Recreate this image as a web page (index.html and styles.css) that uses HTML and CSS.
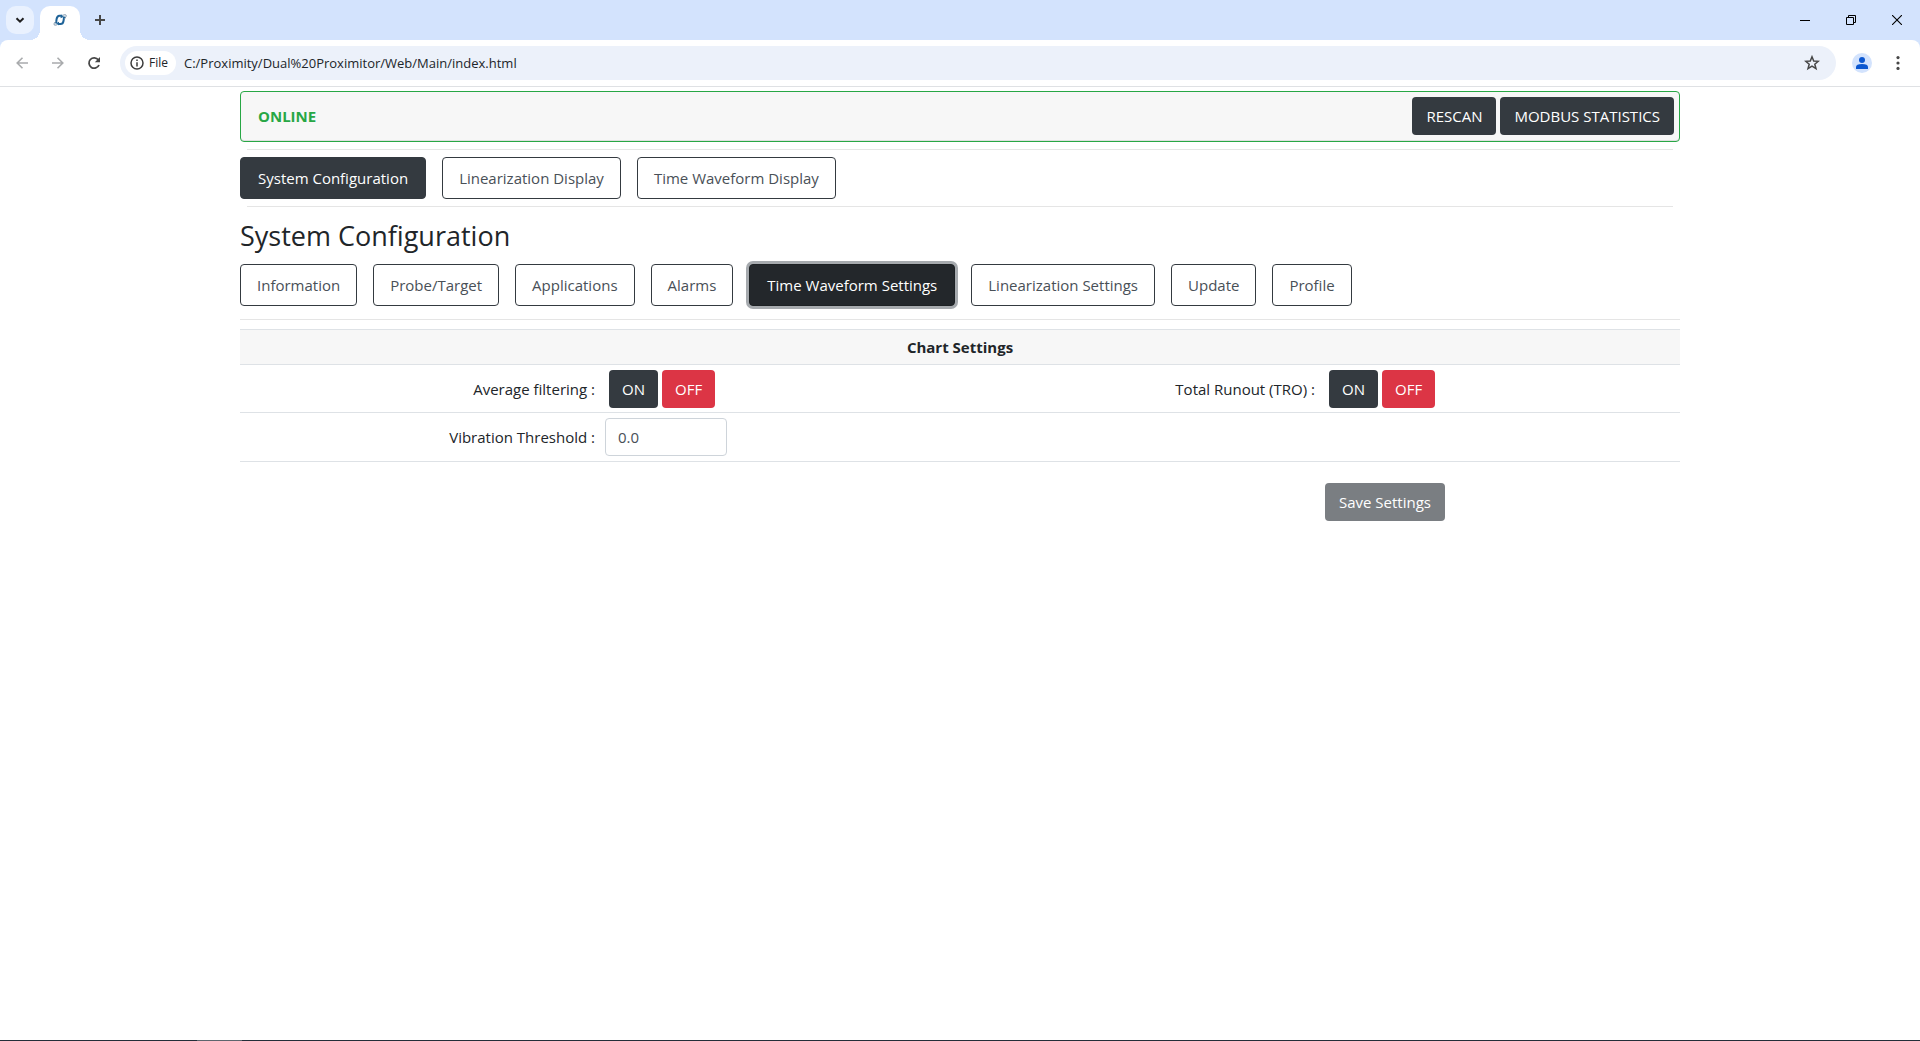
FILE: index.html
```html
<!DOCTYPE html>
<html lang="en">
<head>
<meta charset="utf-8">
<title>System Configuration</title>
<link rel="stylesheet" href="styles.css">
</head>
<body>
<header class="browser">
  <div class="tabstrip">
    <button class="tab-search" aria-label="Search tabs"><svg width="10" height="10" viewBox="0 0 10 10"><path d="M1.5 3.2 5 6.7 8.500 3.200" fill="none" stroke="#1f1f1f" stroke-width="2"/></svg></button>
    <div class="tab"><svg width="14" height="12" viewBox="0 0 14 12" fill="none"><path d="M3 9.500 3.600 5Q4 2 6.500 1.800H9.500M4.500 10H7.500Q10 10 10.500 7L11.200 2.500" stroke="#1f6398" stroke-width="2"/><path d="M8 .5 10.500 3 7.500 4.200zM6 7.800 3.500 9 6 11.500z" fill="#1f6398"/><path d="M3 7Q.5 9.500 1 10.700Q1.600 11.600 4 10.800M10 1.200Q12.600.2 13.200 1.200Q13.500 2.600 11.500 5" stroke="#8198ad"/></svg></div>
    <button class="new-tab" aria-label="New tab"><svg width="12" height="12" viewBox="0 0 12 12"><path d="M6 1v10M1 6h10" stroke="#474747" stroke-width="2"/></svg></button>
    <div class="window-controls">
      <button aria-label="Minimize"><svg width="10" height="10" viewBox="0 0 10 10"><path d="M0 5.500h10" stroke="#000"/></svg></button>
      <button aria-label="Restore"><svg width="10" height="10" viewBox="0 0 10 10" fill="none" stroke="#000"><path d="M.5 2.500h7v7h-7zM2.500 2V.5h7v7H8"/></svg></button>
      <button aria-label="Close"><svg width="10" height="10" viewBox="0 0 10 10"><path d="M0 0l10 10M10 0 0 10" stroke="#000" stroke-width="1.100"/></svg></button>
    </div>
  </div>
  <div class="toolbar">
    <div class="nav">
      <button aria-label="Back" disabled><svg width="12" height="12" viewBox="0 0 12 12" fill="none" stroke="#a9abad" stroke-width="1.600"><path d="M12 6H1.500M6.500.7 1.200 6l5.300 5.300"/></svg></button>
      <button aria-label="Forward" disabled><svg width="12" height="12" viewBox="0 0 12 12" fill="none" stroke="#a9abad" stroke-width="1.600"><path d="M0 6h10.500M5.500.7 10.800 6l-5.300 5.300"/></svg></button>
      <button aria-label="Reload"><svg width="14" height="14" viewBox="0 0 14 14" fill="none"><path d="M12 9a5.200 5.200 0 1 1-.7-5.200" stroke="#474747" stroke-width="1.800"/><path d="M13 1v5.200H7.800z" fill="#474747"/></svg></button>
    </div>
    <div class="omnibox">
      <button class="chip"><svg width="14" height="14" viewBox="0 0 14 14" fill="none" stroke="#3c3c3c"><circle cx="7" cy="7" r="6" stroke-width="1.500"/><path d="M7 6.200v4.200M7 3.500v1.500" stroke-width="1.500"/></svg>File</button>
      <input class="url" type="text" aria-label="Address" value="C:/Proximity/Dual%20Proximitor/Web/Main/index.html">
      <button class="star" aria-label="Bookmark this page"><svg width="16" height="16" viewBox="0 0 16 16"><path d="M8 1.800 9.700 6l4.600.3-3.500 2.900 1.200 4.400L8 11.200l-4 2.400 1.200-4.400L1.700 6.300 6.300 6z" fill="none" stroke="#474747" stroke-width="1.500"/></svg></button>
    </div>
    <button class="avatar" aria-label="Profile"><svg width="20" height="20" viewBox="0 0 20 20" fill="#0b57d0"><circle cx="10" cy="7" r="3"/><path d="M4 16v-2q0-3 6-3t6 3v2z"/></svg></button>
    <button class="menu" aria-label="Menu"><svg width="4" height="14" viewBox="0 0 4 14" fill="#474747"><circle cx="2" cy="1.600" r="1.600"/><circle cx="2" cy="7" r="1.600"/><circle cx="2" cy="12.400" r="1.600"/></svg></button>
  </div>
</header>
<main class="page">
  <section class="status">
    <strong class="status-text">ONLINE</strong>
    <button class="btn btn-dark">RESCAN</button>
    <button class="btn btn-dark">MODBUS STATISTICS</button>
  </section>
  <hr class="rule rule-inset">
  <nav class="tabs">
    <button class="tab-btn selected">System Configuration</button>
    <button class="tab-btn">Linearization Display</button>
    <button class="tab-btn">Time Waveform Display</button>
  </nav>
  <hr class="rule rule-inset">
  <h1 class="title">System Configuration</h1>
  <nav class="tabs">
    <button class="tab-btn">Information</button>
    <button class="tab-btn">Probe/Target</button>
    <button class="tab-btn">Applications</button>
    <button class="tab-btn">Alarms</button>
    <button class="tab-btn selected focused">Time Waveform Settings</button>
    <button class="tab-btn">Linearization Settings</button>
    <button class="tab-btn">Update</button>
    <button class="tab-btn">Profile</button>
  </nav>
  <hr class="rule rule-wide">
  <table class="settings">
    <thead><tr><th colspan="4">Chart Settings</th></tr></thead>
    <tbody>
      <tr>
        <td class="name">Average filtering :</td>
        <td><div class="toggle"><button class="btn btn-dark">ON</button><button class="btn btn-danger">OFF</button></div></td>
        <td class="name">Total Runout (TRO) :</td>
        <td><div class="toggle"><button class="btn btn-dark">ON</button><button class="btn btn-danger">OFF</button></div></td>
      </tr>
      <tr>
        <td class="name"><label for="threshold">Vibration Threshold :</label></td>
        <td><input class="field" id="threshold" type="text" value="0.0"></td>
        <td></td>
        <td></td>
      </tr>
    </tbody>
  </table>
  <div class="actions"><button class="btn btn-dark" disabled>Save Settings</button></div>
</main>
<footer class="taskbar"><span class="task"></span></footer>
</body>
</html>
```
FILE: styles.css
```css
* { box-sizing: border-box; }
body {
  margin: 0;
  min-height: 100vh;
  display: flex;
  flex-direction: column;
  background: #fff;
  color: #212529;
  font: 15px/24px "Open Sans", sans-serif;
}
button, input { font: inherit; color: inherit; margin: 0; }
button { padding: 0; border: 0; background: none; white-space: nowrap; }
svg { display: block; flex: none; }

/* Browser frame */
.browser { background: #d3e3fd; border-bottom: 1px solid #dfe1e4; }
.browser button { display: flex; align-items: center; justify-content: center; }
.tabstrip { display: flex; height: 40px; padding: 6px 0 0 6px; }
.tab-search { width: 28px; height: 28px; border-radius: 10px; background: #e9f1fe; margin-right: 6px; }
.tab {
  position: relative;
  width: 40px;
  display: flex;
  align-items: center;
  justify-content: center;
  padding-bottom: 6px;
  background: #fff;
  border-radius: 10px 10px 0 0;
}
.tab::before, .tab::after {
  content: "";
  position: absolute;
  bottom: 0;
  width: 10px;
  height: 10px;
}
.tab::before { right: 100%; background: radial-gradient(circle at 0 0, transparent 10px, #fff 10px); }
.tab::after { left: 100%; background: radial-gradient(circle at 100% 0, transparent 10px, #fff 10px); }
.new-tab { width: 28px; height: 28px; margin-left: 6px; }
.window-controls { display: flex; margin-left: auto; height: 28px; }
.window-controls button { width: 46px; }
.toolbar {
  display: flex;
  align-items: center;
  height: 46px;
  padding-right: 12px;
  background: #fff;
  border-radius: 8px 8px 0 0;
}
.nav { display: flex; padding: 0 8px 0 4px; }
.nav button { width: 36px; height: 34px; }
.omnibox {
  flex: 1;
  display: flex;
  align-items: center;
  gap: 8px;
  height: 34px;
  padding: 0 16px 0 5px;
  border-radius: 17px;
  background: #ecf1fa;
}
.browser .chip {
  justify-content: flex-start;
  gap: 5px;
  width: 51px;
  height: 24px;
  padding-left: 5px;
  border-radius: 12px;
  background: #fff;
  font-size: 12px;
}
.url { flex: 1; padding: 0; border: 0; background: none; outline: 0; font: 13px/20px "Open Sans", sans-serif; }
.avatar { width: 20px; height: 20px; margin: 0 16px; border-radius: 10px; background: #d3e3fd; }
.menu { width: 20px; height: 20px; }

/* Page */
.page { width: 75%; margin: 0 auto; padding-top: 4px; flex: 1; }
.btn {
  height: 38px;
  padding: 0 14px;
  border-radius: 4px;
  color: #fff;
}
.btn-dark { background: #343a40; }
.btn-danger { background: #dc3545; }
.btn:disabled { opacity: .65; }
.status {
  display: flex;
  align-items: center;
  gap: 4px;
  height: 51px;
  padding: 0 5px 1px 17px;
  border: 1px solid #28a745;
  border-radius: 4px;
  background: #f7f7f7;
  box-shadow: inset 0 -1px #dfdfdf;
}
.status-text { margin-right: auto; color: #28a745; }
.rule { height: 1px; margin: 7px 0; border: 0; background: #e5e5e5; }
.rule-inset { margin-left: 7px; margin-right: 7px; }
.rule-wide { margin: 13px 0 9px; }
.tabs { display: flex; gap: 16px; }
.tab-btn {
  height: 42px;
  padding: 0 16px;
  border: 1px solid #343a40;
  border-radius: 4px;
  color: #495057;
}
.tab-btn.selected { padding: 0 17px; background: #343a40; color: #fff; }
.tab-btn.focused { background: #23272b; border-color: #1d2124; box-shadow: 0 0 0 3px #a6aaae; }
.title { margin: 12px 0 11px; font-size: 27px; line-height: 34px; font-weight: 500; }
.settings { width: 100%; table-layout: fixed; border-collapse: collapse; }
.settings th { height: 35px; padding: 0; border-top: 1px solid #dee2e6; background: #f7f7f7; }
.settings td { height: 48px; padding: 4px 5px; border: 0 solid #dee2e6; border-width: 1px 0; }
.settings tr:last-child td { height: 49px; }
.settings .name { text-align: right; }
.toggle { display: flex; gap: 4px; padding-left: 4px; }
.toggle .btn { padding: 0 13px; }
.field {
  display: block;
  width: 122px;
  height: 38px;
  padding: 0 12px;
  border: 1px solid #ced4da;
  border-radius: 4px;
  color: #495057;
}
.actions { display: grid; grid-template-columns: 3fr 1fr; padding-top: 21px; }
.actions .btn { grid-column: 2; justify-self: start; margin-left: 5px; }

/* Edge of the desktop taskbar */
.taskbar { display: flex; height: 1px; padding-left: 197px; background: #232d38; }
.task { width: 45px; background: #5d656e; }
```
